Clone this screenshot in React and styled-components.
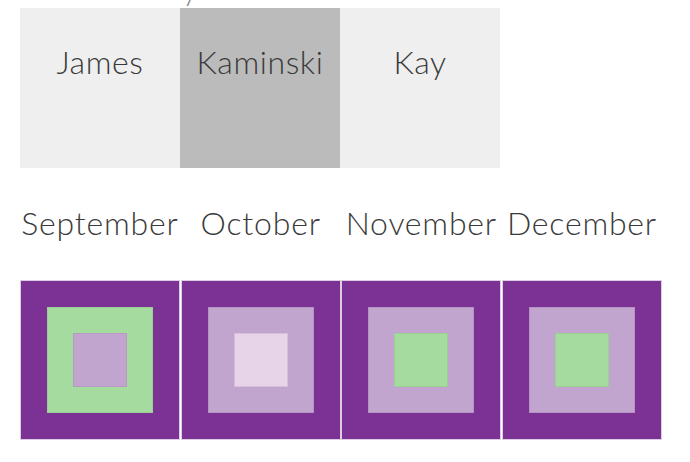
import styled, { createGlobalStyle } from "styled-components";

const GlobalStyle = createGlobalStyle`
  body {
    margin: 0;
    background: #fff;
    font-family: Lato, "Open Sans", sans-serif;
    font-weight: 300;
    color: #3a3a3a;
  }
`;

const names = ["James", "Kaminski", "Kay"];

// PRGn colours, outer -> inner
const months = [
  { name: "September", mid: "#a6dba0", midLine: "#9acf94", inner: "#c2a5cf", innerLine: "#b898c6" },
  { name: "October", mid: "#c2a5cf", midLine: "#b593c4", inner: "#e7d4e8", innerLine: "#d6bfdc" },
  { name: "November", mid: "#c2a5cf", midLine: "#b593c4", inner: "#a6dba0", innerLine: "#9acf94" },
  { name: "December", mid: "#c2a5cf", midLine: "#b593c4", inner: "#a6dba0", innerLine: "#9acf94" },
];

const App = () => {
  return (
    <Page>
      <GlobalStyle />
      <Intro>Pick a family name and a month to see the colour scheme of your choice</Intro>
      <NameRow>
        {names.map((n, i) => (
          <NameCell key={n} selected={i === 1}>
            {n}
          </NameCell>
        ))}
      </NameRow>
      <MonthRow>
        {months.map((m) => (
          <MonthLabel key={m.name}>{m.name}</MonthLabel>
        ))}
      </MonthRow>
      <SquareRow>
        {months.map((m) => (
          <Outer key={m.name}>
            <Middle fill={m.mid} line={m.midLine}>
              <Inner fill={m.inner} line={m.innerLine} />
            </Middle>
          </Outer>
        ))}
      </SquareRow>
    </Page>
  );
};

const Page = styled.div`
  padding: 0 20px;
  width: 690px;
  box-sizing: border-box;
  overflow: hidden;
`;

const Intro = styled.div`
  font-size: 32px;
  line-height: 38px;
  margin-top: -31px;
  white-space: nowrap;
  letter-spacing: 0.6px;
  color: #888;
`;

const NameRow = styled.div`
  display: flex;
  margin-top: 1px;
`;

const NameCell = styled.div`
  width: 160px;
  height: 160px;
  box-sizing: border-box;
  padding-top: 35px;
  text-align: center;
  font-size: 32px;
  line-height: 38px;
  letter-spacing: 0.6px;
  background: ${(p) => (p.selected ? "#bbbbbb" : "#efefef")};
`;

const MonthRow = styled.div`
  display: flex;
  gap: 0.67px;
  margin-top: 36px;
`;

const MonthLabel = styled.div`
  width: 160px;
  flex: none;
  white-space: nowrap;
  font-size: 32px;
  line-height: 38px;
  letter-spacing: 0.8px;
  display: flex;
  justify-content: center;
`;

const SquareRow = styled.div`
  display: flex;
  gap: 0.67px;
  margin-top: 38px;
`;

const Outer = styled.div`
  width: 160px;
  height: 160px;
  flex: none;
  box-sizing: border-box;
  border: 1px solid #dccde2;
  background: #7b3294;
  display: flex;
  align-items: center;
  justify-content: center;
`;

const Middle = styled.div`
  width: 106px;
  height: 106px;
  box-sizing: border-box;
  border: 1px solid ${(p) => p.line};
  background: ${(p) => p.fill};
  display: flex;
  align-items: center;
  justify-content: center;
`;

const Inner = styled.div`
  width: 54px;
  height: 54px;
  box-sizing: border-box;
  border: 1px solid ${(p) => p.line};
  background: ${(p) => p.fill};
`;

export default App;
